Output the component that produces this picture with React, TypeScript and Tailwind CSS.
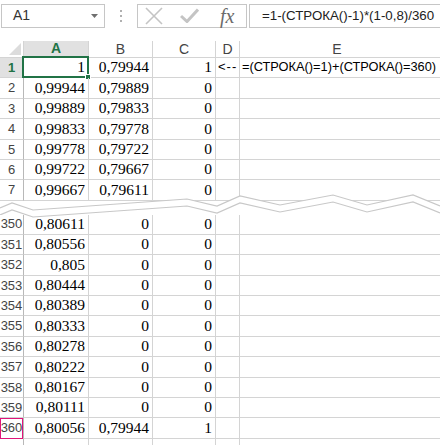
import React from "react";

type Row = {
  n: string;
  a?: string;
  b?: string;
  c?: string;
  d?: string;
  e?: string;
};

const top: Row[] = [
  { n: "1", a: "1", b: "0,79944", c: "1", d: "<--", e: "=(СТРОКА()=1)+(СТРОКА()=360)" },
  { n: "2", a: "0,99944", b: "0,79889", c: "0" },
  { n: "3", a: "0,99889", b: "0,79833", c: "0" },
  { n: "4", a: "0,99833", b: "0,79778", c: "0" },
  { n: "5", a: "0,99778", b: "0,79722", c: "0" },
  { n: "6", a: "0,99722", b: "0,79667", c: "0" },
  { n: "7", a: "0,99667", b: "0,79611", c: "0" },
];

const bottom: Row[] = [
  { n: "350", a: "0,80611", b: "0", c: "0" },
  { n: "351", a: "0,80556", b: "0", c: "0" },
  { n: "352", a: "0,805", b: "0", c: "0" },
  { n: "353", a: "0,80444", b: "0", c: "0" },
  { n: "354", a: "0,80389", b: "0", c: "0" },
  { n: "355", a: "0,80333", b: "0", c: "0" },
  { n: "356", a: "0,80278", b: "0", c: "0" },
  { n: "357", a: "0,80222", b: "0", c: "0" },
  { n: "358", a: "0,80167", b: "0", c: "0" },
  { n: "359", a: "0,80111", b: "0", c: "0" },
  { n: "360", a: "0,80056", b: "0,79944", c: "1" },
  { n: "" },
];

const sans = "font-['Liberation_Sans',Arial,sans-serif]";
const serif = "font-['Liberation_Serif','Times_New_Roman',serif]";

function SheetRow({ row }: { row: Row }) {
  const selected = row.n === "1";
  const marked = row.n === "360";
  return (
    <div className="flex h-[20.4px] shrink-0">
      <div
        className={`relative flex w-[24px] shrink-0 items-center justify-center border-r border-b border-r-[#b8b8b8] border-b-[#d4d4d4] text-[13px] ${sans} ${
          selected ? "bg-[#e1e1e1] font-bold text-[#217346]" : "bg-white text-[#444]"
        }`}
      >
        {marked && <div className="absolute inset-x-[0px] top-[0px] bottom-[-1px] border border-[#e0157a]" />}
        <span className="relative">{row.n}</span>
      </div>
      <div className={`relative flex w-[65px] shrink-0 items-end justify-end border-r border-b border-[#d4d4d4] pr-[3px] pb-[1px] text-[15.5px] leading-[18px] text-black ${serif}`}>
        {row.a}
        {selected && (
          <div className="absolute top-[-2px] left-[-2px] right-[-1px] bottom-[-1px] border-2 border-[#217346]">
            <div className="absolute right-[-4px] bottom-[-4px] h-[6px] w-[6px] border border-white bg-[#217346]" />
          </div>
        )}
      </div>
      <div className={`flex w-[64px] shrink-0 items-end justify-end border-r border-b border-[#d4d4d4] pr-[3px] pb-[1px] text-[15.5px] leading-[18px] text-black ${serif}`}>
        {row.b}
      </div>
      <div className={`flex w-[63px] shrink-0 items-end justify-end border-r border-b border-[#d4d4d4] pr-[3px] pb-[1px] text-[15.5px] leading-[18px] text-black ${serif}`}>
        {row.c}
      </div>
      <div className={`flex w-[24px] shrink-0 items-end overflow-visible whitespace-nowrap border-r border-b border-[#d4d4d4] pl-[2px] pb-[2px] text-[13px] leading-[16px] tracking-[1px] text-black ${sans}`}>
        {row.d}
      </div>
      <div className={`flex flex-1 items-end whitespace-nowrap border-b border-[#d4d4d4] pl-[2px] pb-[2px] text-[12.8px] leading-[16px] text-black ${sans}`}>
        {row.e}
      </div>
    </div>
  );
}

function Break() {
  const upper: [number, number][] = [
    [0, 15],
    [12, 10],
    [33, 17],
    [187, 6],
    [217, 13],
    [240, 3],
    [280, 12],
    [333, 2],
    [367, 12],
    [413, 2],
    [440, 13],
  ];
  const off = 7;
  const up = upper.map(([x, y]) => `${x},${y}`).join(" ");
  const low = upper.map(([x, y]) => `${x},${y + off}`).join(" ");
  const fill = `${up} ${[...upper].reverse().map(([x, y]) => `${x},${y + off}`).join(" ")}`;
  return (
    <div className="relative h-[13.8px] shrink-0">
      <svg className="absolute left-0 top-[-8px] overflow-visible" width="440" height="28" viewBox="0 0 440 28">
        <polygon points={fill} fill="#ffffff" />
        <polyline points={up} fill="none" stroke="#c8c8c8" strokeWidth="1.2" />
        <polyline points={low} fill="none" stroke="#c8c8c8" strokeWidth="1.2" />
      </svg>
    </div>
  );
}

export default function App() {
  return (
    <div className={`flex h-[445px] w-[440px] flex-col overflow-hidden bg-white ${sans}`}>
      {/* formula bar */}
      <div className="flex h-[30px] shrink-0 items-center pt-[1px]">
        <div className="ml-[1px] flex h-[24px] w-[104px] items-center justify-between border border-[#c6c6c6] pl-[11px] pr-[6px] text-[14px] text-[#333]">
          <span>A1</span>
          <svg width="7" height="4" viewBox="0 0 7 4">
            <polygon points="0,0 7,0 3.5,4" fill="#6f6f6f" />
          </svg>
        </div>
        <div className="flex w-[32px] flex-col items-center gap-[3px]">
          <span className="h-[2px] w-[2px] bg-[#b0b0b0]" />
          <span className="h-[2px] w-[2px] bg-[#b0b0b0]" />
          <span className="h-[2px] w-[2px] bg-[#b0b0b0]" />
        </div>
        <div className="flex h-[24px] w-[110px] items-center border border-[#c6c6c6]">
          <svg className="ml-[7px]" width="18" height="18" viewBox="0 0 18 18">
            <path d="M1 1 L17 17 M17 1 L1 17" stroke="#c4c4c4" strokeWidth="1.6" fill="none" />
          </svg>
          <svg className="ml-[17px]" width="19" height="15" viewBox="0 0 19 15">
            <path d="M1 8 L7 13.5 L18 1.5" stroke="#c4c4c4" strokeWidth="3" fill="none" />
          </svg>
          <span className={`ml-[21px] text-[20px] italic leading-none text-[#6b6b6b] ${serif}`}>fx</span>
        </div>
        <div className="ml-[2px] flex h-[24px] flex-1 items-center whitespace-nowrap border border-r-0 border-[#c6c6c6] pl-[12px] text-[13.3px] text-[#222]">
          =1-(СТРОКА()-1)*(1-0,8)/360
        </div>
      </div>

      {/* column headers */}
      <div className="mt-[11px] flex h-[17px] shrink-0 text-[14px] text-[#444]">
        <div className="relative w-[24px] shrink-0 border-r border-b border-[#d4d4d4]">
          <svg className="absolute right-[2px] bottom-[2px]" width="12" height="12" viewBox="0 0 12 12">
            <polygon points="12,0 12,12 0,12" fill="#dcdcdc" />
          </svg>
        </div>
        <div className="flex w-[65px] shrink-0 items-center justify-center border-r border-b-2 border-r-[#d4d4d4] border-b-[#217346] bg-[#e1e1e1] font-bold text-[#217346]">
          A
        </div>
        <div className="flex w-[64px] shrink-0 items-center justify-center border-r border-b border-[#d4d4d4]">B</div>
        <div className="flex w-[63px] shrink-0 items-center justify-center border-r border-b border-[#d4d4d4]">C</div>
        <div className="flex w-[24px] shrink-0 items-center justify-center border-r border-b border-[#d4d4d4]">D</div>
        <div className="flex flex-1 items-center justify-center border-b border-[#d4d4d4] pr-[6px]">E</div>
      </div>

      {top.map((r) => (
        <SheetRow key={r.n} row={r} />
      ))}
      <Break />
      {bottom.map((r, i) => (
        <SheetRow key={r.n || `x${i}`} row={r} />
      ))}
    </div>
  );
}
